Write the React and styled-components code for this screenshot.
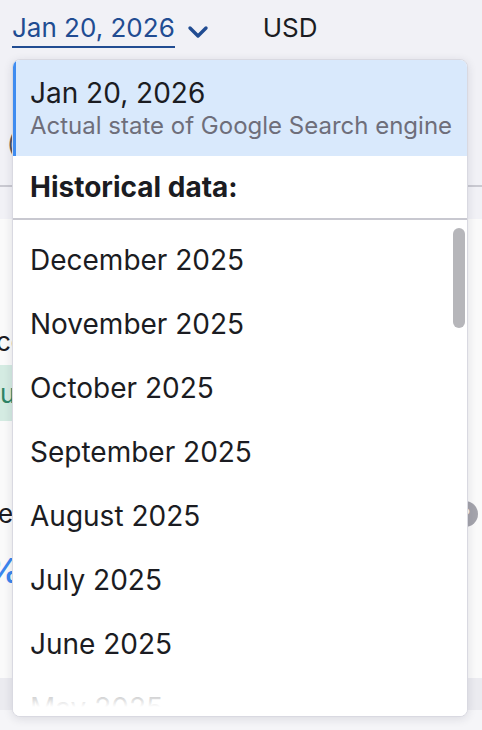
import React from "react";
import styled, { createGlobalStyle } from "styled-components";

const GlobalStyle = createGlobalStyle`
  html, body {
    margin: 0;
    padding: 0;
    background: #f5f5f8;
    font-family: Inter, "Noto Sans", sans-serif;
    color: #1b1c22;
  }
`;

const Page = styled.div`
  position: relative;
  width: 482px;
  height: 730px;
  overflow: hidden;
  display: flex;
  flex-direction: column;
`;

const Header = styled.div`
  background: #f1f1f6;
  height: 219px;
  display: flex;
  flex-direction: column;
`;

const TopBar = styled.div`
  display: flex;
  align-items: flex-start;
  padding: 12px 0 0 12px;
  height: 44px;
`;

const DateLink = styled.span`
  font-size: 26px;
  line-height: 32px;
  color: #214c92;
  border-bottom: 2px solid #214c92;
  padding-bottom: 2px;
`;

const Chevron = styled.svg`
  margin: 13px 0 0 12px;
  width: 22px;
  height: 14px;
`;

const Currency = styled.span`
  font-size: 26px;
  line-height: 32px;
  margin-left: 54px;
  color: #1b1c22;
`;

const FilterRow = styled.div`
  height: 131px;
  display: flex;
  align-items: flex-start;
  padding: 74px 0 0 7px;
  font-size: 24px;
  line-height: 30px;
  color: #555;
  border-bottom: 2px solid #c9c9d1;
  box-sizing: border-box;
`;

const Card = styled.div`
  background: #fafafa;
  height: 459px;
  display: flex;
  flex-direction: column;
  padding-top: 108px;
  box-sizing: border-box;
`;

const CardText = styled.div`
  font-size: ${(p) => p.$size || 26}px;
  line-height: 30px;
  margin-left: ${(p) => p.$shift || 0}px;
  color: ${(p) => p.$color || "#1b1c22"};
  font-weight: ${(p) => p.$weight || 400};
  margin-top: ${(p) => p.$gap || 0}px;
`;

const Badge = styled.div`
  margin-top: 8px;
  width: 200px;
  height: 56px;
  margin-left: -30px;
  background: #d4ebe2;
  color: #2f8466;
  font-size: 26px;
  display: flex;
  align-items: center;
  padding-left: 10px;
`;

const MetricRow = styled.div`
  display: flex;
  justify-content: space-between;
  align-items: center;
  margin-top: 78px;
  padding-right: 4px;
`;

const HelpIcon = styled.div`
  width: 26px;
  height: 26px;
  border-radius: 50%;
  background: #a4a4ac;
  color: #fafafa;
  font-size: 18px;
  font-weight: 700;
  display: flex;
  align-items: center;
  justify-content: center;
`;

const Band = styled.div`
  height: 32px;
  background: #ebebf0;
`;

const Dropdown = styled.div`
  position: absolute;
  top: 59px;
  left: 12px;
  width: 456px;
  height: 658px;
  box-sizing: border-box;
  background: #fff;
  border: 1px solid #d9d9e1;
  border-radius: 8px;
  box-shadow: 0 2px 10px rgba(30, 30, 60, 0.12);
  overflow: hidden;
  display: flex;
  flex-direction: column;
`;

const Current = styled.div`
  height: 96px;
  flex: none;
  background: #d9e9fc;
  border-left: 3px solid #3f8cf0;
  padding: 2px 0 0 14px;
  display: flex;
  flex-direction: column;
  justify-content: center;
  box-sizing: border-box;
`;

const CurrentTitle = styled.div`
  font-size: 28px;
  line-height: 34px;
  color: #1b1c22;
`;

const CurrentSub = styled.div`
  font-size: 24px;
  line-height: 32px;
  color: #6e6e7a;
`;

const GroupTitle = styled.div`
  height: 62px;
  flex: none;
  display: flex;
  align-items: center;
  padding-left: 17px;
  font-size: 28px;
  font-weight: 700;
  color: #1b1c22;
  border-bottom: 2px solid #c8c8d0;
`;

const List = styled.div`
  position: relative;
  flex: 1;
  overflow: hidden;
  padding-top: 8px;
`;

const Option = styled.div`
  height: 64px;
  display: flex;
  align-items: center;
  padding-left: 17px;
  font-size: 28px;
  color: #1b1c22;
`;

const Fade = styled.div`
  position: absolute;
  left: 0;
  right: 0;
  bottom: 0;
  height: 60px;
  background: linear-gradient(to bottom, rgba(255, 255, 255, 0), #fff 85%);
`;

const Thumb = styled.div`
  position: absolute;
  top: 8px;
  right: 2px;
  width: 12px;
  height: 100px;
  border-radius: 6px;
  background: #b6b6ba;
`;

const months = [
  "December 2025",
  "November 2025",
  "October 2025",
  "September 2025",
  "August 2025",
  "July 2025",
  "June 2025",
  "May 2025",
  "April 2025",
];

export default function App() {
  return (
    <Page>
      <GlobalStyle />
      <Header>
        <TopBar>
          <DateLink>Jan 20, 2026</DateLink>
          <Chevron viewBox="0 0 22 14">
            <path d="M3 3l8 8 8-8" fill="none" stroke="#214c92" strokeWidth="3.4" strokeLinecap="round" strokeLinejoin="round" />
          </Chevron>
          <Currency>USD</Currency>
        </TopBar>
        <FilterRow>(Google</FilterRow>
      </Header>
      <Card>
        <CardText $shift={-4}>co</CardText>
        <Badge>
          <span style={{ marginLeft: 20 }}>u</span>
        </Badge>
        <MetricRow>
          <CardText $shift={-2}>e</CardText>
          <HelpIcon>?</HelpIcon>
        </MetricRow>
        <CardText $shift={-14} $size={34} $color="#3b86ee" $weight={700} $gap={27}>
          %
        </CardText>
      </Card>
      <Band />

      <Dropdown>
        <Current>
          <CurrentTitle>Jan 20, 2026</CurrentTitle>
          <CurrentSub>Actual state of Google Search engine</CurrentSub>
        </Current>
        <GroupTitle>Historical data:</GroupTitle>
        <List>
          {months.map((m) => (
            <Option key={m}>{m}</Option>
          ))}
          <Fade />
          <Thumb />
        </List>
      </Dropdown>
    </Page>
  );
}
